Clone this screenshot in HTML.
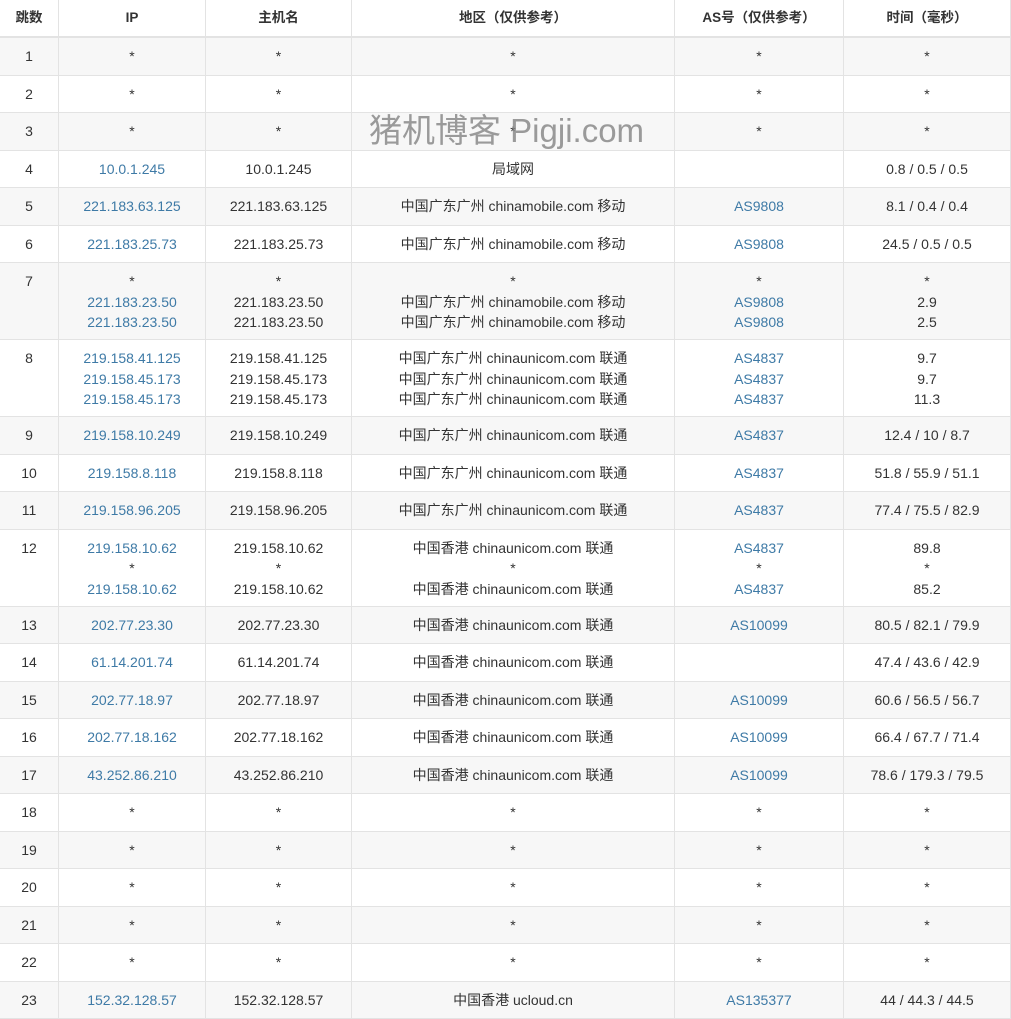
<!DOCTYPE html>
<html><head><meta charset="utf-8"><style>
body{margin:0;width:1011px;height:1015px;overflow:hidden;background:#fff;font-family:"Liberation Sans","Noto Sans CJK SC",sans-serif;font-size:14px;color:#333;position:relative}
table{border-collapse:collapse;table-layout:fixed;width:1011px;position:absolute;left:-1px;top:-1px}
td,th{border:1px solid #e3e3e3;text-align:center;padding:0;line-height:20.5px;height:36.5px}
th{font-weight:bold;height:36px;border-bottom:2px solid #e3e3e3;font-size:13.5px}
tr:nth-child(even) td{background:#f7f7f7}
tr.m td{vertical-align:top;padding-top:8px;height:68px}
a{color:#3e7aa6;text-decoration:none}
.wm{position:absolute;left:369px;top:104px;font-size:33px;color:rgba(130,130,130,.8);white-space:nowrap}
</style></head><body>
<table>
<colgroup><col style="width:59px"><col style="width:147px"><col style="width:146px"><col style="width:323px"><col style="width:169px"><col style="width:167px"></colgroup>
<tr><th>跳数</th><th>IP</th><th>主机名</th><th>地区（仅供参考）</th><th>AS号（仅供参考）</th><th>时间（毫秒）</th></tr>
<tr><td>1</td><td>*</td><td>*</td><td>*</td><td>*</td><td>*</td></tr>
<tr><td>2</td><td>*</td><td>*</td><td>*</td><td>*</td><td>*</td></tr>
<tr><td>3</td><td>*</td><td>*</td><td>*</td><td>*</td><td>*</td></tr>
<tr><td>4</td><td><a>10.0.1.245</a></td><td>10.0.1.245</td><td>局域网</td><td></td><td>0.8 / 0.5 / 0.5</td></tr>
<tr><td>5</td><td><a>221.183.63.125</a></td><td>221.183.63.125</td><td>中国广东广州 chinamobile.com 移动</td><td><a>AS9808</a></td><td>8.1 / 0.4 / 0.4</td></tr>
<tr><td>6</td><td><a>221.183.25.73</a></td><td>221.183.25.73</td><td>中国广东广州 chinamobile.com 移动</td><td><a>AS9808</a></td><td>24.5 / 0.5 / 0.5</td></tr>
<tr class="m"><td>7</td><td>*<br><a>221.183.23.50</a><br><a>221.183.23.50</a></td><td>*<br>221.183.23.50<br>221.183.23.50</td><td>*<br>中国广东广州 chinamobile.com 移动<br>中国广东广州 chinamobile.com 移动</td><td>*<br><a>AS9808</a><br><a>AS9808</a></td><td>*<br>2.9<br>2.5</td></tr>
<tr class="m"><td>8</td><td><a>219.158.41.125</a><br><a>219.158.45.173</a><br><a>219.158.45.173</a></td><td>219.158.41.125<br>219.158.45.173<br>219.158.45.173</td><td>中国广东广州 chinaunicom.com 联通<br>中国广东广州 chinaunicom.com 联通<br>中国广东广州 chinaunicom.com 联通</td><td><a>AS4837</a><br><a>AS4837</a><br><a>AS4837</a></td><td>9.7<br>9.7<br>11.3</td></tr>
<tr><td>9</td><td><a>219.158.10.249</a></td><td>219.158.10.249</td><td>中国广东广州 chinaunicom.com 联通</td><td><a>AS4837</a></td><td>12.4 / 10 / 8.7</td></tr>
<tr><td>10</td><td><a>219.158.8.118</a></td><td>219.158.8.118</td><td>中国广东广州 chinaunicom.com 联通</td><td><a>AS4837</a></td><td>51.8 / 55.9 / 51.1</td></tr>
<tr><td>11</td><td><a>219.158.96.205</a></td><td>219.158.96.205</td><td>中国广东广州 chinaunicom.com 联通</td><td><a>AS4837</a></td><td>77.4 / 75.5 / 82.9</td></tr>
<tr class="m"><td>12</td><td><a>219.158.10.62</a><br>*<br><a>219.158.10.62</a></td><td>219.158.10.62<br>*<br>219.158.10.62</td><td>中国香港 chinaunicom.com 联通<br>*<br>中国香港 chinaunicom.com 联通</td><td><a>AS4837</a><br>*<br><a>AS4837</a></td><td>89.8<br>*<br>85.2</td></tr>
<tr><td>13</td><td><a>202.77.23.30</a></td><td>202.77.23.30</td><td>中国香港 chinaunicom.com 联通</td><td><a>AS10099</a></td><td>80.5 / 82.1 / 79.9</td></tr>
<tr><td>14</td><td><a>61.14.201.74</a></td><td>61.14.201.74</td><td>中国香港 chinaunicom.com 联通</td><td></td><td>47.4 / 43.6 / 42.9</td></tr>
<tr><td>15</td><td><a>202.77.18.97</a></td><td>202.77.18.97</td><td>中国香港 chinaunicom.com 联通</td><td><a>AS10099</a></td><td>60.6 / 56.5 / 56.7</td></tr>
<tr><td>16</td><td><a>202.77.18.162</a></td><td>202.77.18.162</td><td>中国香港 chinaunicom.com 联通</td><td><a>AS10099</a></td><td>66.4 / 67.7 / 71.4</td></tr>
<tr><td>17</td><td><a>43.252.86.210</a></td><td>43.252.86.210</td><td>中国香港 chinaunicom.com 联通</td><td><a>AS10099</a></td><td>78.6 / 179.3 / 79.5</td></tr>
<tr><td>18</td><td>*</td><td>*</td><td>*</td><td>*</td><td>*</td></tr>
<tr><td>19</td><td>*</td><td>*</td><td>*</td><td>*</td><td>*</td></tr>
<tr><td>20</td><td>*</td><td>*</td><td>*</td><td>*</td><td>*</td></tr>
<tr><td>21</td><td>*</td><td>*</td><td>*</td><td>*</td><td>*</td></tr>
<tr><td>22</td><td>*</td><td>*</td><td>*</td><td>*</td><td>*</td></tr>
<tr><td>23</td><td><a>152.32.128.57</a></td><td>152.32.128.57</td><td>中国香港 ucloud.cn</td><td><a>AS135377</a></td><td>44 / 44.3 / 44.5</td></tr>
</table>
<div class="wm">猪机博客 Pigji.com</div>
</body></html>
